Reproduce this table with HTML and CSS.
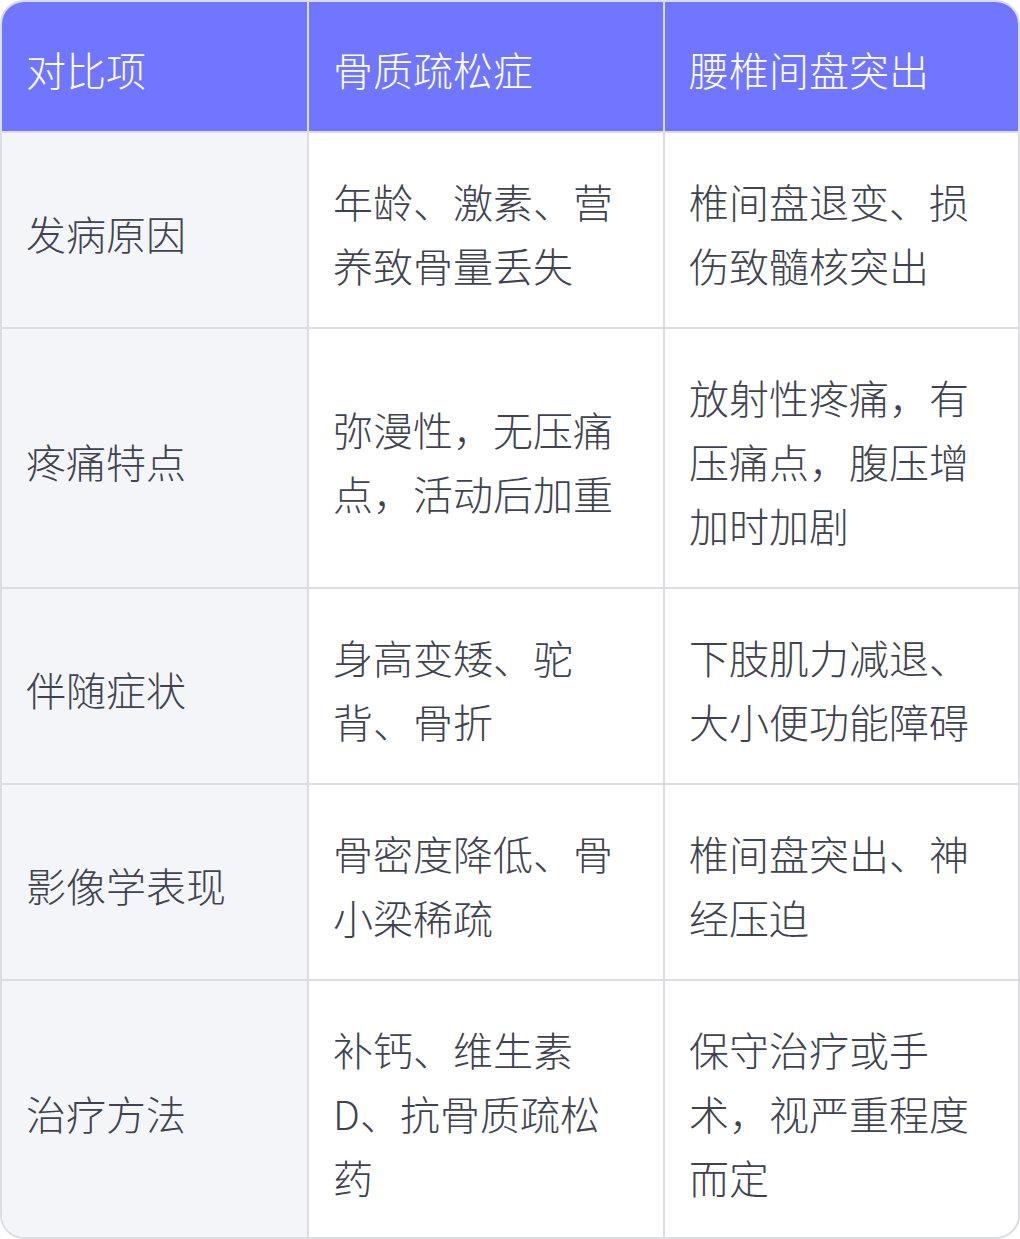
FILE: index.html
```html
<!DOCTYPE html>
<html lang="zh-CN">
<head>
<meta charset="utf-8">
<title>骨质疏松症与腰椎间盘突出对比</title>
<link rel="stylesheet" href="styles.css">
</head>
<body>
<div class="card">
  <table class="compare">
    <colgroup>
      <col class="c1"><col class="c2"><col class="c3">
    </colgroup>
    <thead>
      <tr><th>对比项</th><th>骨质疏松症</th><th>腰椎间盘突出</th></tr>
    </thead>
    <tbody>
      <tr><td class="label">发病原因</td><td>年龄、激素、营养致骨量丢失</td><td>椎间盘退变、损伤致髓核突出</td></tr>
      <tr><td class="label">疼痛特点</td><td>弥漫性，无压痛点，活动后加重</td><td>放射性疼痛，有压痛点，腹压增加时加剧</td></tr>
      <tr><td class="label">伴随症状</td><td>身高变矮、驼背、骨折</td><td>下肢肌力减退、大小便功能障碍</td></tr>
      <tr><td class="label">影像学表现</td><td>骨密度降低、骨小梁稀疏</td><td>椎间盘突出、神经压迫</td></tr>
      <tr><td class="label">治疗方法</td><td>补钙、维生素D、抗骨质疏松药</td><td>保守治疗或手术，视严重程度而定</td></tr>
    </tbody>
  </table>
</div>
</body>
</html>
```

FILE: styles.css
```css
html, body {
  margin: 0;
  padding: 0;
  background: #ffffff;
}

.card {
  width: 1020px;
  height: 1239px;
  box-sizing: border-box;
  border: 2px solid #dcdde3;
  border-radius: 24px;
  overflow: hidden;
  background: #ffffff;
}

.compare {
  width: 100%;
  border-collapse: separate;
  border-spacing: 0;
  table-layout: fixed;
  font-family: "Noto Sans CJK SC", "Noto Sans", sans-serif;
  font-size: 40px;
  font-weight: 300;
  line-height: 64px;
  color: #3f4350;
}

.c1 { width: 307px; }
.c2 { width: 356px; }
.c3 { width: auto; }

.compare th,
.compare td {
  box-sizing: border-box;
  padding: 36px 24px 30px;
  text-align: left;
  vertical-align: middle;
  border-right: 2px solid #dcdde3;
  border-bottom: 2px solid #dcdde3;
  font-weight: 300;
}

.compare th:last-child,
.compare td:last-child {
  border-right: none;
}

.compare tbody tr:last-child td {
  border-bottom: none;
}

.compare th {
  background: #7076ff;
  color: #ffffff;
  padding-top: 35px;
  padding-bottom: 30px;
}

.compare td.label {
  background: #f4f5f9;
}
```
